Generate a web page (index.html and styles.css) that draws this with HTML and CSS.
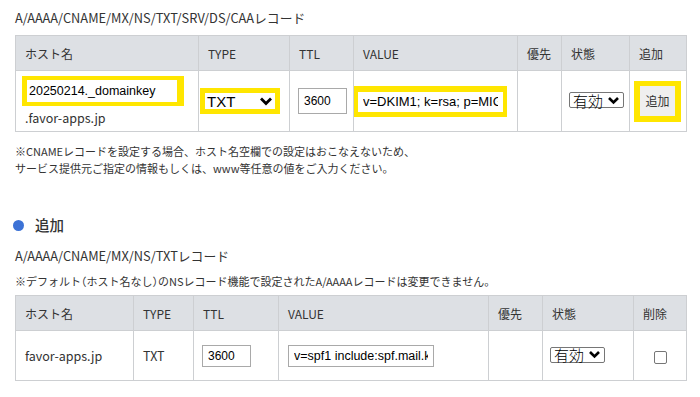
FILE: index.html
```html
<!DOCTYPE html>
<html lang="ja">
<head>
    <meta charset="UTF-8">
    <meta name="viewport" content="width=device-width, initial-scale=1.0">
    <title>DNSレコード設定</title>
    <link rel="stylesheet" href="styles.css">
</head>
<body>
    <div class="page">
        <p class="caption">A/AAAA/CNAME/MX/NS/TXT/SRV/DS/CAAレコード</p>
        <table class="records add-table">
            <colgroup>
                <col class="c-host1"><col class="c-type1"><col class="c-ttl1"><col class="c-value1">
                <col class="c-pri1"><col class="c-state1"><col class="c-act1">
            </colgroup>
            <thead>
                <tr>
                    <th>ホスト名</th><th>TYPE</th><th>TTL</th><th>VALUE</th>
                    <th>優先</th><th>状態</th><th>追加</th>
                </tr>
            </thead>
            <tbody>
                <tr>
                    <td>
                        <div class="hl hl-host"><input class="field" type="text" value="20250214._domainkey"></div>
                        <div class="suffix">.favor-apps.jp</div>
                    </td>
                    <td>
                        <div class="hl hl-type">
                            <div class="type-select">
                                <span>TXT</span>
                                <svg width="14" height="10" viewBox="0 0 14 10"><path d="M2 2.5 L7 7.5 L12 2.5" fill="none" stroke="#000" stroke-width="2.8"/></svg>
                            </div>
                        </div>
                    </td>
                    <td><input class="field ttl" type="text" value="3600"></td>
                    <td><div class="hl hl-value"><input class="field value" type="text" value="v=DKIM1; k=rsa; p=MIGfMA0GCSqGSIb3DQEBAQUAA4GNADCBiQKBgQ"></div></td>
                    <td></td>
                    <td>
                        <div class="state-select">
                            <span>有効</span>
                            <svg width="13" height="9" viewBox="0 0 13 9"><path d="M2 2 L6.5 6.5 L11 2" fill="none" stroke="#000" stroke-width="2.6"/></svg>
                        </div>
                    </td>
                    <td><div class="hl hl-btn"><button class="add-btn">追加</button></div></td>
                </tr>
            </tbody>
        </table>

        <p class="note">※CNAMEレコードを設定する場合、ホスト名空欄での設定はおこなえないため、<br>サービス提供元ご指定の情報もしくは、www等任意の値をご入力ください。</p>

        <h2 class="section-title"><span class="dot"></span>追加</h2>

        <p class="caption small-gap">A/AAAA/CNAME/MX/NS/TXTレコード</p>
        <p class="note single">※デフォルト（ホスト名なし）のNSレコード機能で設定されたA/AAAAレコードは変更できません。</p>

        <table class="records list-table">
            <colgroup>
                <col class="c-host2"><col class="c-type2"><col class="c-ttl2"><col class="c-value2">
                <col class="c-pri2"><col class="c-state2"><col class="c-act2">
            </colgroup>
            <thead>
                <tr>
                    <th>ホスト名</th><th>TYPE</th><th>TTL</th><th>VALUE</th>
                    <th>優先</th><th>状態</th><th>削除</th>
                </tr>
            </thead>
            <tbody>
                <tr>
                    <td>favor-apps.jp</td>
                    <td>TXT</td>
                    <td><input class="field ttl" type="text" value="3600"></td>
                    <td><input class="field value2" type="text" value="v=spf1 include:spf.mail.kagoya.net ~all"></td>
                    <td></td>
                    <td>
                        <div class="state-select">
                            <span>有効</span>
                            <svg width="13" height="9" viewBox="0 0 13 9"><path d="M2 2 L6.5 6.5 L11 2" fill="none" stroke="#000" stroke-width="2.6"/></svg>
                        </div>
                    </td>
                    <td class="center"><span class="check"></span></td>
                </tr>
            </tbody>
        </table>
    </div>
</body>
</html>
```

FILE: styles.css
```css
body {
    margin: 0;
    background-color: #fff;
    color: #333;
    font-family: "Noto Sans CJK JP", "Liberation Sans", sans-serif;
}
.page {
    padding: 9px 14px 0 15px;
}
.caption {
    margin: 0;
    font-size: 12.8px;
    line-height: 18px;
}
.records {
    width: 671px;
    border-collapse: collapse;
    table-layout: fixed;
    margin-top: 8px;
}
.records th,
.records td {
    border: 1px solid #cdcfd2;
    padding: 0 0 0 9px;
    text-align: left;
    vertical-align: middle;
    font-size: 12px;
}
.records th {
    background-color: #dde0e4;
    font-weight: normal;
    height: 34px;
}
.records td.center {
    text-align: center;
    padding: 0;
}
.add-table td {
    height: 60px;
}
.list-table td {
    height: 48px;
    font-size: 12.5px;
}
.c-host1 { width: 183px; }
.c-type1 { width: 91px; }
.c-ttl1 { width: 64px; }
.c-value1 { width: 164px; }
.c-pri1 { width: 44px; }
.c-state1 { width: 68px; }
.c-act1 { width: 57px; }
.c-host2 { width: 118px; }
.c-type2 { width: 60px; }
.c-ttl2 { width: 85px; }
.c-value2 { width: 210px; }
.c-pri2 { width: 54px; }
.c-state2 { width: 91px; }
.c-act2 { width: 53px; }

.field {
    box-sizing: border-box;
    border: 1px solid #a9a9a9;
    background-color: #fff;
    font-family: "Liberation Sans", Arial, sans-serif;
    font-size: 12px;
    color: #000;
    padding: 0 5px;
    margin: 0;
    outline: none;
}
.hl {
    display: inline-block;
    background-color: #ffe600;
    box-sizing: border-box;
}
.hl-host {
    margin-left: -3px;
    padding: 4px 7px 4px 5px;
}
.hl-host .field {
    width: 150px;
    height: 22px;
    border: none;
    font-size: 12.5px;
    padding: 0 2px;
}
.suffix {
    margin-top: 3px;
    font-size: 12.5px;
    line-height: 18px;
}
.hl-type {
    margin-left: -8px;
    padding: 5px 5px;
}
.type-select {
    display: flex;
    align-items: center;
    justify-content: space-between;
    width: 70px;
    height: 16px;
    background-color: #fff;
    font-family: "Liberation Sans", Arial, sans-serif;
    font-size: 15px;
    color: #000;
    padding: 0 2px;
    box-sizing: border-box;
}
.ttl {
    width: 49px;
    height: 26px;
    margin-left: -1px;
}
.hl-value {
    margin-left: -9px;
    padding: 6px 4px 5px 4px;
}
.hl-value .field {
    width: 145px;
    height: 20px;
    border: none;
    font-size: 13px;
}
.state-select {
    display: inline-flex;
    align-items: center;
    gap: 4px;
    height: 16px;
    margin-left: -2px;
    padding: 0 3px 0 3px;
    border: 1px solid #767676;
    border-radius: 2px;
    font-size: 15px;
    font-weight: 300;
    color: #000;
    box-sizing: border-box;
}
.hl-btn {
    margin-left: -5px;
    padding: 5px 6px 6px 6px;
}
.add-btn {
    width: 35px;
    height: 30px;
    border: none;
    background-color: #efefef;
    font-family: "Noto Sans CJK JP", sans-serif;
    font-size: 12px;
    color: #333;
    padding: 0;
}
.note {
    margin: 11px 0 0;
    font-size: 11px;
    line-height: 17px;
}
.note.single {
    margin-top: 8px;
    font-feature-settings: "halt";
}
.section-title {
    display: flex;
    align-items: center;
    margin: 38px 0 0 -2px;
    font-size: 14.5px;
    font-weight: 500;
    line-height: 20px;
}
.dot {
    width: 11px;
    height: 11px;
    border-radius: 50%;
    background-color: #3c72d6;
    margin-right: 11px;
}
.small-gap {
    margin-top: 12px;
}
.list-table {
    margin-top: 5px;
}
.value2 {
    width: 146px;
    height: 22px;
    font-size: 12.5px;
}
.list-table .ttl {
    height: 22px;
    width: 49px;
}
.list-table td {
    height: 49px;
}
.check {
    display: inline-block;
    width: 11px;
    height: 11px;
    border: 1px solid #767676;
    border-radius: 2px;
    vertical-align: middle;
}
```
